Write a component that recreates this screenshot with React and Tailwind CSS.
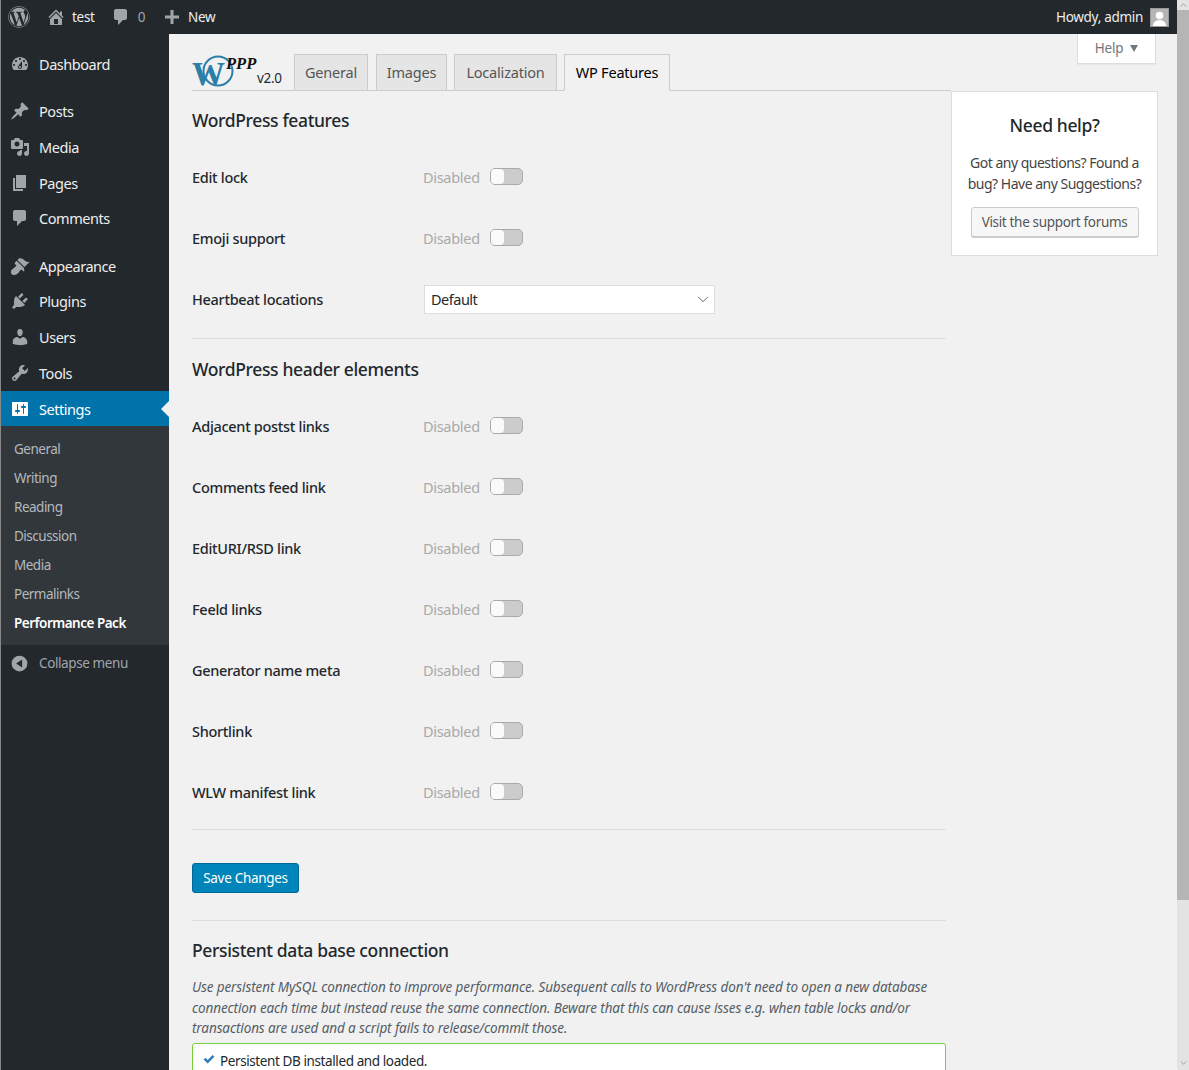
import React from "react";
import { FaWordpress } from "react-icons/fa";

const icons = {
  home: "M16 8.5l1.53 1.53-1.06 1.06L10 4.62l-6.47 6.47-1.06-1.06L10 2.5l4 4v-2h2v4zm-6-2.46l6 5.99V18H4v-5.97zM12 17v-5H8v5h4z",
  comment: "M5 2h9c1.1 0 2 .9 2 2v7c0 1.1-.9 2-2 2h-2l-5 5v-5H5c-1.1 0-2-.9-2-2V4c0-1.1.9-2 2-2z",
  plus: "M17 8.500v3h-5.500V17h-3v-5.500H3v-3h5.500V3h3v5.500z",
  dashboard: "M3.76 16h12.48c1.1-1.37 1.76-3.11 1.76-5 0-4.42-3.58-8-8-8s-8 3.58-8 8c0 1.89.66 3.63 1.76 5zM10 4c.55 0 1 .45 1 1s-.45 1-1 1-1-.45-1-1 .45-1 1-1zM6 6c.55 0 1 .45 1 1s-.45 1-1 1-1-.45-1-1 .45-1 1-1zm8 0c.55 0 1 .45 1 1s-.45 1-1 1-1-.45-1-1 .45-1 1-1zm-5.37 5.55L12 7v6c0 1.1-.9 2-2 2s-2-.9-2-2c0-.57.24-1.08.63-1.45zM4 10c.55 0 1 .45 1 1s-.45 1-1 1-1-.45-1-1 .45-1 1-1zm12 0c.55 0 1 .45 1 1s-.45 1-1 1-1-.45-1-1 .45-1 1-1zm-5 3c0-.55-.45-1-1-1s-1 .45-1 1 .45 1 1 1 1-.45 1-1z",
  posts: "M10.44 3.02l1.82-1.82 6.36 6.35-1.83 1.82c-1.05-.68-2.48-.57-3.41.36l-.75.75c-.92.93-1.04 2.35-.35 3.41l-1.83 1.82-2.41-2.41-2.8 2.79c-.42.42-3.38 2.71-3.8 2.29s1.86-3.39 2.28-3.81l2.79-2.79L4.1 9.36l1.83-1.82c1.05.69 2.48.57 3.4-.36l.75-.75c.93-.92 1.05-2.35.36-3.41z",
  media: "M13 11V4c0-.55-.45-1-1-1h-1.67L9 1H5L3.67 3H2c-.55 0-1 .45-1 1v7c0 .55.45 1 1 1h10c.55 0 1-.45 1-1zM7 4.5c1.38 0 2.5 1.12 2.5 2.5S8.38 9.5 7 9.5 4.5 8.38 4.5 7 5.62 4.5 7 4.5zM14 6h5v10.5c0 1.38-1.12 2.5-2.5 2.5S14 17.88 14 16.5s1.12-2.5 2.5-2.5c.17 0 .34.02.5.05V9h-3V6zm-4 8.05V13h2v3.5c0 1.38-1.12 2.5-2.5 2.5S7 17.88 7 16.5 8.12 14 9.5 14c.17 0 .34.02.5.05z",
  pages: "M6 15V2h10v13H6zm-1 1h8v2H3V5h2v11z",
  appearance: "M14.48 11.06L7.41 3.99l1.5-1.5c.5-.56 2.3-.47 3.51.32 1.21.8 1.43 1.28 2.91 2.1 1.18.64 2.45 1.26 4.45.85zm-.71.71L6.7 4.7 4.93 6.47c-.39.39-.39 1.02 0 1.41l1.06 1.06c.39.39.39 1.03 0 1.42-.6.6-1.43 1.11-2.21 1.69-.35.26-.7.53-1.01.84C1.43 13.23.91 14.91 1 16.45c.03.63.28 1.2.78 1.7s1.08.75 1.71.78c1.54.09 3.22-.43 4.56-1.77.31-.31.58-.66.84-1.01.58-.78 1.09-1.61 1.69-2.21.39-.39 1.03-.39 1.42 0l1.06 1.06c.39.39 1.02.39 1.41 0z",
  plugins: "M13.11 4.36L9.87 7.6 8 5.73l3.24-3.24c.35-.34 1.05-.2 1.56.32.52.51.66 1.21.31 1.55zm-8 1.77l.91-1.12 9.01 9.01-1.19.84c-.71.71-2.63 1.16-3.82 1.16H6.14L4.9 17.26c-.59.59-1.54.59-2.12 0-.59-.58-.59-1.53 0-2.12l1.24-1.24v-3.88c0-1.13.4-3.19 1.09-3.89zm7.26 3.97l3.24-3.24c.34-.35 1.04-.21 1.55.31.52.51.66 1.21.31 1.55l-3.24 3.25z",
  users: "M10 9.25c-2.27 0-2.73-3.44-2.73-3.44C7 4.02 7.82 2 9.97 2c2.16 0 2.98 2.02 2.71 3.81 0 0-.41 3.44-2.68 3.44zm0 2.57L12.72 10c2.39 0 4.52 2.33 4.52 4.53v2.49s-3.65 1.13-7.24 1.13c-3.65 0-7.24-1.13-7.24-1.13v-2.49c0-2.25 1.94-4.48 4.47-4.48z",
  tools: "M16.68 9.77c-1.34 1.34-3.3 1.67-4.95.99l-5.41 6.52c-.99.99-2.59.99-3.58 0s-.99-2.59 0-3.57l6.52-5.42c-.68-1.65-.35-3.61.99-4.95 1.28-1.28 3.12-1.62 4.72-1.06l-2.89 2.89 2.82 2.82 2.86-2.87c.53 1.58.18 3.39-1.08 4.65zM3.81 16.21c.4.39 1.04.39 1.43 0 .4-.4.4-1.04 0-1.43-.39-.4-1.03-.4-1.43 0-.39.39-.39 1.03 0 1.43z",
  settings: "M18 16V4c0-.55-.45-1-1-1H3c-.55 0-1 .45-1 1v12c0 .55.45 1 1 1h14c.55 0 1-.45 1-1zM8 11h1c.55 0 1 .45 1 1s-.45 1-1 1H8v1.5c0 .28-.22.5-.5.5s-.5-.22-.5-.5V13H6c-.55 0-1-.45-1-1s.45-1 1-1h1V5.5c0-.28.22-.5.5-.5s.5.22.5.5V11zm5-2h-1c-.55 0-1-.45-1-1s.45-1 1-1h1V5.5c0-.28.22-.5.5-.5s.5.22.5.5V7h1c.55 0 1 .45 1 1s-.45 1-1 1h-1v5.5c0 .28-.22.5-.5.5s-.5-.22-.5-.5V9z",
  collapse: "M10 2.5a7.5 7.5 0 1 0 0 15 7.5 7.5 0 0 0 0-15zM12.5 6.2v7.6L6.8 10z",
};

const Dash = ({ name, className }) => (
  <svg viewBox="0 0 20 20" fill="currentColor" fillRule="evenodd" className={className}>
    <path d={icons[name]} />
  </svg>
);

const MenuItem = ({ icon, label, className = "", active }) => (
  <div className={`flex items-center ${active ? "relative bg-[#0073aa] text-white" : "text-[#eeeeee]"} ${className}`}>
    <Dash name={icon} className={`ml-[9px] h-5 w-5 ${active ? "text-white" : "text-[#a0a5aa]"}`} />
    <span className="ml-[9px] pt-[2px]">{label}</span>
    {active && (
      <span className="absolute right-0 top-1/2 h-0 w-0 -translate-y-1/2 border-y-[8px] border-r-[8px] border-y-transparent border-r-[#f1f1f1]" />
    )}
  </div>
);

const Sidebar = () => (
  <aside className="h-full w-[168px] shrink-0 bg-[#23282d] pt-[12px] text-[14.5px] tracking-[-0.45px]">
    <MenuItem icon="dashboard" label="Dashboard" className="h-[36px]" />
    <div className="mt-[11px]">
      <MenuItem icon="posts" label="Posts" className="h-[36px]" />
      <MenuItem icon="media" label="Media" className="h-[36px]" />
      <MenuItem icon="pages" label="Pages" className="h-[35px]" />
      <MenuItem icon="comment" label="Comments" className="h-[35px]" />
    </div>
    <div className="mt-[13px]">
      <MenuItem icon="appearance" label="Appearance" className="h-[35px]" />
      <MenuItem icon="plugins" label="Plugins" className="h-[36px]" />
      <MenuItem icon="users" label="Users" className="h-[36px]" />
      <MenuItem icon="tools" label="Tools" className="h-[36px]" />
      <MenuItem icon="settings" label="Settings" className="h-[35px]" active />
    </div>
    <div className="bg-[#32373c] pb-[7px] pt-[9px] text-[13.5px] tracking-[-0.5px] text-[#b4b9be]">
      {["General", "Writing", "Reading", "Discussion", "Media", "Permalinks"].map((s) => (
        <div key={s} className="flex h-[29px] items-center pl-[13px]">{s}</div>
      ))}
      <div className="flex h-[29px] items-center pl-[13px] font-semibold text-white">Performance Pack</div>
    </div>
    <div className="mt-[8px] flex h-[20px] items-center text-[13.5px] tracking-[-0.4px] text-[#a0a5aa]">
      <Dash name="collapse" className="ml-[8px] h-[21px] w-[21px]" />
      <span className="ml-[9px]">Collapse menu</span>
    </div>
  </aside>
);

const AdminBar = () => (
  <header className="flex h-[34px] shrink-0 items-center bg-[#23282d] text-[13.5px] tracking-[-0.3px] text-[#eeeeee]">
    <FaWordpress className="ml-[7px] h-[22px] w-[22px] text-[#a0a5aa]" />
    <Dash name="home" className="ml-[16px] h-5 w-5 text-[#a0a5aa]" />
    <span className="ml-[6px]">test</span>
    <Dash name="comment" className="ml-[16px] h-5 w-5 text-[#a0a5aa]" />
    <span className="ml-[7px] text-[#a0a5aa]">0</span>
    <Dash name="plus" className="ml-[17px] h-5 w-5 text-[#a0a5aa]" />
    <span className="ml-[6px]">New</span>
    <span className="ml-auto">Howdy, admin</span>
    <span className="ml-[7px] mr-[8px] flex h-[19px] w-[19px] items-end justify-center overflow-hidden border border-[#999] bg-[#b5b5b5]">
      <svg viewBox="0 0 18 18" className="h-[17px] w-[17px]" fill="#fff">
        <circle cx="9" cy="7" r="4" />
        <path d="M2 18c0-4 3-6 7-6s7 2 7 6z" />
      </svg>
    </span>
  </header>
);

const Logo = () => (
  <div className="relative h-[36px] w-[65px] shrink-0">
    <svg viewBox="0 0 65 36" className="absolute left-0 top-0 h-[36px] w-[65px] overflow-visible">
      <circle cx="26" cy="17" r="14.500" fill="none" stroke="#2b7ea8" strokeWidth="2" />
      <text x="0" y="31" fontFamily="'Liberation Serif', serif" fontSize="33" fontWeight="700" fill="#2b7ea8">W</text>
      <text x="34" y="15" fontFamily="'Liberation Serif', serif" fontSize="16.500" fontWeight="700" fontStyle="italic" fill="#111">PPP</text>
    </svg>
    <span className="absolute left-[65px] top-[14px] text-[13.5px] tracking-[-0.3px] text-[#23282d]">v2.0</span>
  </div>
);

const Tab = ({ label, w, active }) => (
  <div
    className={`-mb-px flex h-[37px] items-center justify-center border border-[#cccccc] pt-px text-[14.5px] tracking-[-0.2px] ${w} ${
      active ? "border-b-[#f1f1f1] bg-[#f1f1f1] text-black" : "bg-[#e5e5e5] text-[#555555]"
    }`}
  >
    {label}
  </div>
);

const Toggle = () => (
  <div className="ml-[10px] -mt-[2px] flex h-[17px] w-[33px] rounded-[5px] border border-[#aaaaaa] bg-[#cccccc]">
    <div className="h-full w-[13px] rounded-[4px] bg-[#fafafa]" />
  </div>
);

const Row = ({ label, children }) => (
  <div className="flex h-[61px] items-center">
    <div className="w-[231px] shrink-0 text-[14.5px] font-medium tracking-[-0.3px] text-[#23282d]">{label}</div>
    {children}
  </div>
);

const ToggleRow = ({ label }) => (
  <Row label={label}>
    <span className="text-[14.5px] tracking-[-0.3px] text-[#aaaaaa]">Disabled</span>
    <Toggle />
  </Row>
);

const Heading = ({ children, className = "" }) => (
  <h2 className={`text-[17.5px] font-medium leading-[24px] tracking-[-0.36px] text-[#23282d] ${className}`}>{children}</h2>
);

const Form = () => (
  <div className="w-[754px] shrink-0">
    <Heading className="pt-[17px]">WordPress features</Heading>
    <div className="mt-[15px]">
      <ToggleRow label="Edit lock" />
      <ToggleRow label="Emoji support" />
      <Row label="Heartbeat locations">
        <div className="ml-px flex h-[29px] w-[291px] items-center justify-between border border-[#dddddd] bg-white pl-[6px] pr-[5px] text-[14.5px] tracking-[-0.5px] text-[#23282d]">
          Default
          <svg viewBox="0 0 12 8" className="h-[7px] w-[12px]" fill="none" stroke="#555" strokeWidth="1">
            <path d="M0.500 1l5.500 5.500 5.500-5.500" />
          </svg>
        </div>
      </Row>
    </div>
    <div className="mt-[8px] border-t border-[#dddddd]" />
    <Heading className="pt-[18px]">WordPress header elements</Heading>
    <div className="mt-[15px]">
      {["Adjacent postst links", "Comments feed link", "EditURI/RSD link", "Feeld links", "Generator name meta", "Shortlink", "WLW manifest link"].map((l) => (
        <ToggleRow key={l} label={l} />
      ))}
    </div>
    <div className="mt-[6px] border-t border-[#dddddd]" />
    <button className="mt-[33px] block h-[30px] w-[107px] rounded-[3px] border border-[#006799] bg-[#0085ba] text-[13.5px] tracking-[-0.3px] text-white">
      Save Changes
    </button>
    <div className="mt-[27px] border-t border-[#dddddd]" />
    <Heading className="pt-[17px]">Persistent data base connection</Heading>
    <p className="mt-[15px] text-[13.5px] italic leading-[20.5px] tracking-[-0.11px] text-[#555d66]">
      Use persistent MySQL connection to improve performance. Subsequent calls to WordPress don't need to open a new database connection each time but instead reuse the same connection. Beware that this can cause isses e.g. when table locks and/or transactions are used and a script fails to release/commit those.
    </p>
    <div className="mt-[4px] flex h-[40px] items-start rounded-t-[3px] border border-[#7ad03a] bg-white pl-[10px] pt-[7px] text-[13.5px] tracking-[-0.4px] text-[#23282d]">
      <svg viewBox="0 0 12 10" className="mt-[4px] h-[9px] w-[12px]" fill="#2e7db8">
        <path d="M0 5l2-2 2.500 2.500L10 0l2 2-7.500 7.500z" />
      </svg>
      <span className="ml-[5px]">Persistent DB installed and loaded.</span>
    </div>
  </div>
);

const HelpCard = () => (
  <div className="ml-[5px] h-[165px] w-[207px] shrink-0 border border-[#dddddd] bg-white px-[8px] text-center">
    <h3 className="mt-[21px] text-[17.5px] font-medium leading-[24px] tracking-[-0.36px] text-[#23282d]">Need help?</h3>
    <p className="mt-[15px] text-[14px] leading-[21px] tracking-[-0.5px] text-[#444444]">
      Got any questions? Found a bug? Have any Suggestions?
    </p>
    <button className="mx-auto mt-[13px] block h-[30px] w-[168px] rounded-[3px] border border-[#cccccc] bg-[#f7f7f7] text-[13.5px] tracking-[-0.33px] text-[#555555] shadow-[0_1px_0_#cccccc]">
      Visit the support forums
    </button>
  </div>
);

const Scrollbar = () => (
  <div className="flex h-full w-[12px] shrink-0 flex-col bg-[#e3e3e3]">
    <div className="flex h-[10px] items-center justify-center">
      <svg viewBox="0 0 8 5" className="h-[4px] w-[7px]" fill="none" stroke="#a0a0a0" strokeWidth="1.200"><path d="M0.500 4.500L4 1l3.500 3.500" /></svg>
    </div>
    <div className="h-[890px] bg-[#b5b5b5]" />
    <div className="mt-auto flex h-[14px] items-center justify-center">
      <svg viewBox="0 0 8 5" className="h-[4px] w-[7px]" fill="none" stroke="#a0a0a0" strokeWidth="1.200"><path d="M0.500 0.500L4 4l3.500-3.500" /></svg>
    </div>
  </div>
);

export default function App() {
  return (
    <div className="flex h-[1070px] overflow-hidden bg-[#f1f1f1] font-['Noto_Sans',sans-serif]">
      <div className="flex min-w-0 flex-1 flex-col border-l border-[#888888]">
        <AdminBar />
        <div className="flex min-h-0 flex-1">
          <Sidebar />
          <main className="relative min-w-0 flex-1 pl-[23px]">
            <div className="absolute right-[21px] top-0 flex h-[30px] w-[79px] items-center justify-center gap-[7px] border border-t-0 border-[#dddddd] bg-white text-[13.5px] tracking-[-0.2px] text-[#72777c] shadow-[0_1px_1px_rgba(0,0,0,0.04)]">
              Help
              <span className="h-0 w-0 border-x-[4.5px] border-t-[7px] border-x-transparent border-t-[#72777c]" />
            </div>
            <div className="flex h-[57px] w-[759px] items-end gap-[7px] border-b border-[#cccccc]">
              <div className="mr-[30px]"><Logo /></div>
              <Tab label="General" w="w-[74px] mr-px" />
              <Tab label="Images" w="w-[71px]" />
              <Tab label="Localization" w="w-[103px]" />
              <Tab label="WP Features" w="w-[106px]" active />
            </div>
            <div className="flex items-start">
              <Form />
              <HelpCard />
            </div>
          </main>
        </div>
      </div>
      <Scrollbar />
    </div>
  );
}
